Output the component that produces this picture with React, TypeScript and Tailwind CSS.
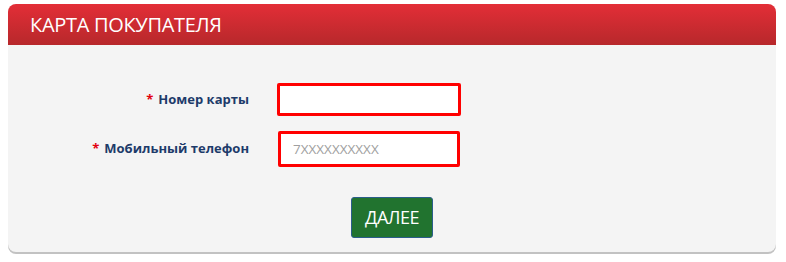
export default function App() {
  return (
    <div className="w-[786px] h-[262px] bg-white pt-[4px] pl-[8px]" style={{ fontFamily: '"Open Sans", "Liberation Sans", sans-serif' }}>
      <div className="w-[768px] h-[248px] rounded-[8px] bg-[#f4f4f4] shadow-[0_2px_0_0_#c2c2c2] overflow-hidden flex flex-col">
        {/* Header */}
        <div className="h-[41px] bg-gradient-to-b from-[#e32e37] to-[#b7282b] flex items-center pl-[22px]">
          <h2 className="text-white text-[20px] tracking-[-0.3px] leading-none">КАРТА ПОКУПАТЕЛЯ</h2>
        </div>

        {/* Form */}
        <div className="flex flex-col pt-[38px]">
          <div className="flex items-center">
            <label className="w-[241px] text-right text-[13px] font-bold text-[#1d3b6a]">
              <span className="text-[#e3000f] mr-[5px]">*</span>Номер карты
            </label>
            <input
              className="ml-[28px] w-[184px] h-[33px] bg-white border-[3px] border-[#ff0000] rounded-[2px] outline-none px-[12px] text-[13px]"
            />
          </div>
          <div className="flex items-center mt-[15px]">
            <label className="w-[241px] text-right text-[13px] font-bold text-[#1d3b6a]">
              <span className="text-[#e3000f] mr-[5px]">*</span>Мобильный телефон
            </label>
            <input
              placeholder="7XXXXXXXXXX"
              className="ml-[29px] w-[182px] h-[36px] bg-white border-[3px] border-[#ff0000] rounded-[2px] outline-none px-[12px] text-[13.5px] placeholder:text-[#a0a0a0]"
            />
          </div>
          <div className="flex mt-[30px] pl-[343px]">
            <button className="w-[82px] h-[41px] bg-[#21732f] border border-[#2a5d8a] rounded-[3px] text-white text-[18px] tracking-[-0.5px]">
              ДАЛЕЕ
            </button>
          </div>
        </div>
      </div>
    </div>
  );
}
